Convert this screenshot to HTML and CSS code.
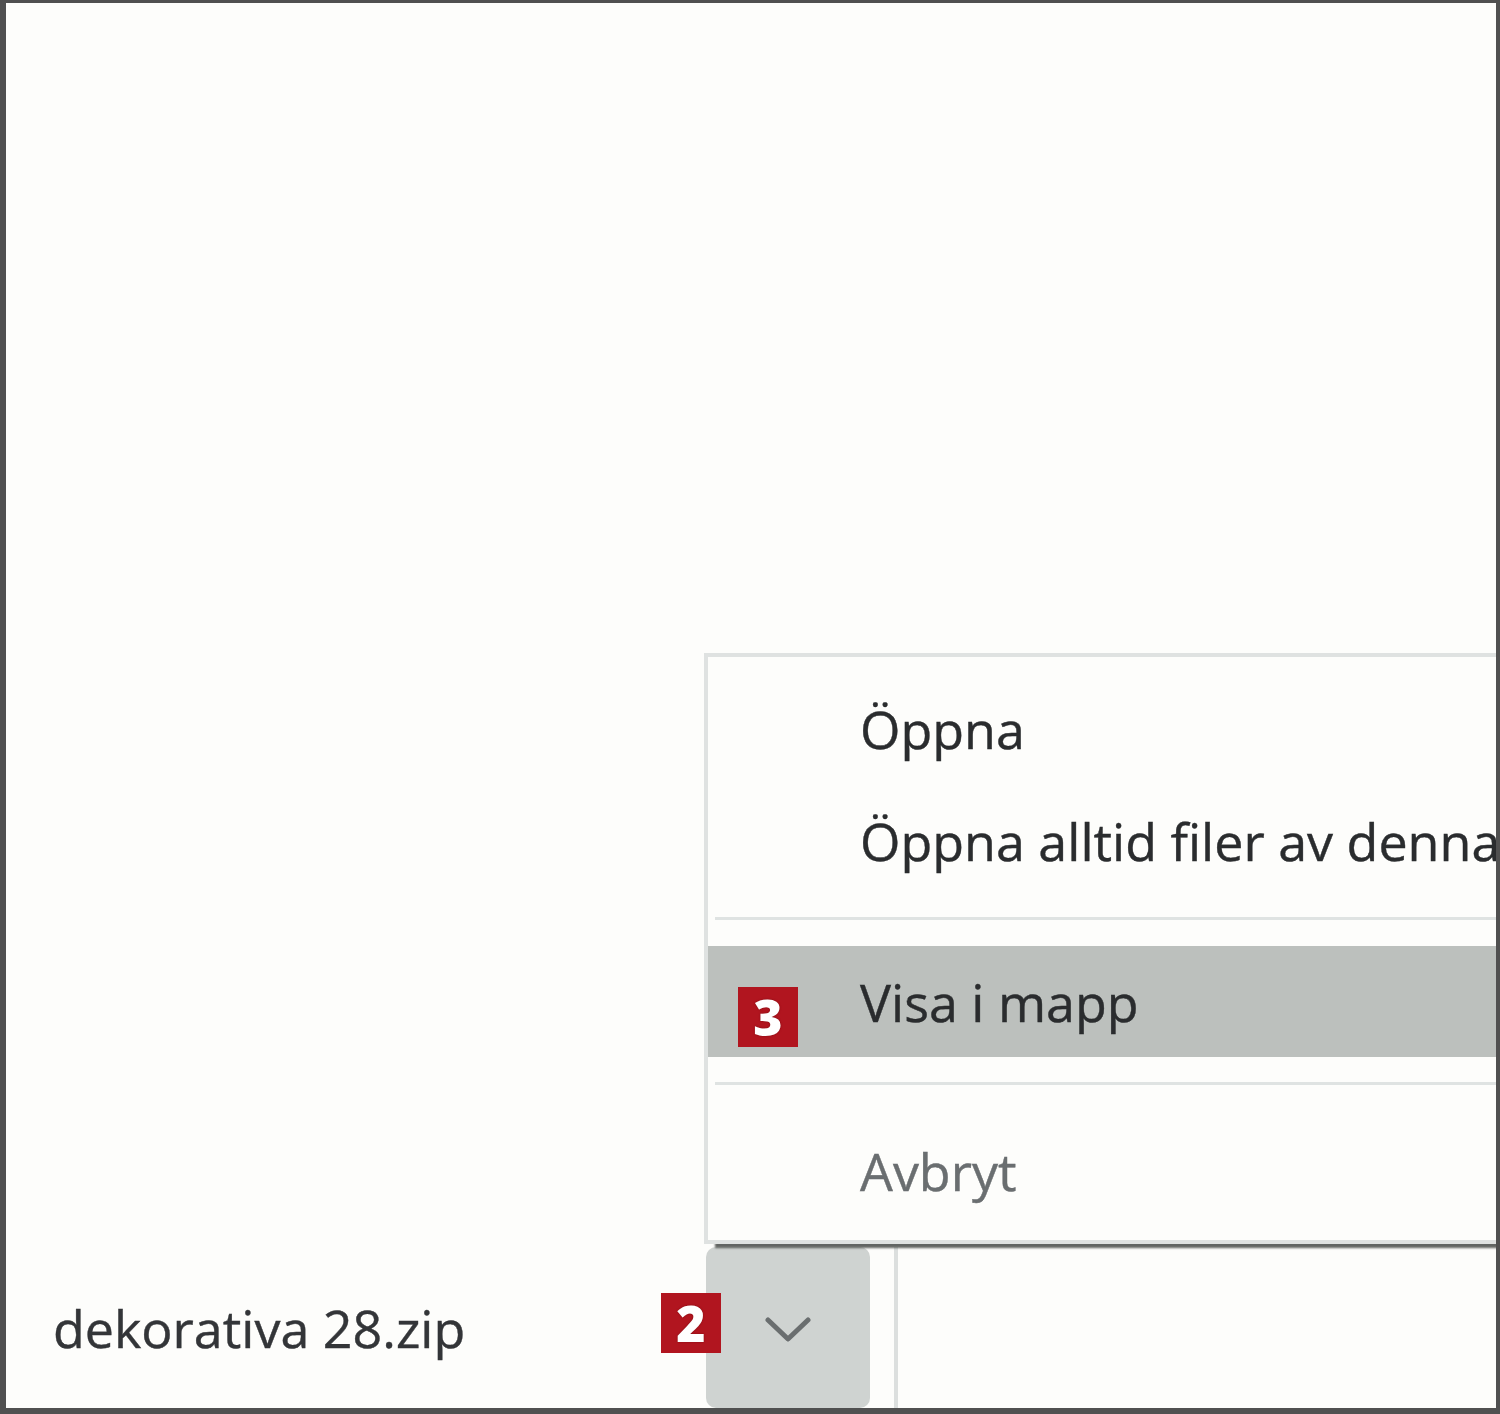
FILE: index.html
```html
<!DOCTYPE html>
<html lang="sv">
<head>
<meta charset="utf-8">
<title>Nedladdning</title>
<link rel="stylesheet" href="styles.css">
</head>
<body>
<div class="frame">
  <div class="inner">
    <div class="content"></div>

    <div class="menu">
      <div class="item">Öppna</div>
      <div class="item">Öppna alltid filer av denna typ</div>
      <div class="sep sep-a"></div>
      <div class="item item-active">
        <span class="badge badge-3">3</span>
        Visa i mapp
      </div>
      <div class="sep sep-b"></div>
      <div class="item item-muted">Avbryt</div>
    </div>

    <div class="bar">
      <div class="file">dekorativa 28.zip</div>
      <span class="badge badge-2">2</span>
      <div class="dropbtn">
        <svg class="chev" width="46" height="26" viewBox="0 0 46 26">
          <path d="M3 3 L23 22 L43 3" fill="none" stroke="#6a6e6f" stroke-width="5" stroke-linecap="round" stroke-linejoin="round"/>
        </svg>
      </div>
      <div class="vline"></div>
    </div>
  </div>
</div>
</body>
</html>
```

FILE: styles.css
```css
html, body {
  margin: 0;
  padding: 0;
  background: #4d4d4d;
}

.frame {
  width: 1500px;
  height: 1414px;
  box-sizing: border-box;
  border-style: solid;
  border-color: #505050;
  border-width: 3px 4px 6px 6px;
  display: flex;
}

.inner {
  position: relative;
  flex: 1;
  overflow: hidden;
  background: #fdfdfb;
  display: flex;
  flex-direction: column;
  font-family: "Open Sans", "Noto Sans", "Liberation Sans", sans-serif;
  color: #2a2c2e;
}

.content {
  flex: 1;
}

/* context menu */
.menu {
  position: absolute;
  left: 698px;
  top: 650px;
  width: 900px;
  border: 4px solid #dfe2e1;
  background: #fdfdfb;
  padding: 15px 0 14px 0;
  box-shadow: 10px 5px 2px -1px rgba(70, 74, 72, 0.85);
  z-index: 2;
}

.item {
  position: relative;
  height: 112px;
  display: flex;
  align-items: center;
  padding-left: 152px;
  font-size: 52px;
  white-space: nowrap;
  -webkit-text-stroke: 0.4px currentColor;
}

.item-active {
  height: 111px;
  background: #bcc0bd;
}

.item-muted {
  color: #6a6e70;
}

.sep {
  height: 3px;
  margin-left: 7px;
  background: #dfe3e2;
}

.sep-a {
  margin-top: 21px;
  margin-bottom: 26px;
}

.sep-b {
  margin-top: 25px;
  margin-bottom: 29px;
}

/* badges */
.badge {
  position: absolute;
  width: 60px;
  height: 60px;
  background: #b1151f;
  color: #ffffff;
  font-family: "Open Sans", "Liberation Sans", sans-serif;
  font-weight: 800;
  font-size: 50px;
  line-height: 60px;
  text-align: center;
  text-shadow: 0 0 2px #7a0a10;
  -webkit-text-stroke: 0;
  z-index: 3;
}

.badge-3 {
  left: 30px;
  top: 41px;
}

.badge-2 {
  left: 655px;
  top: 46px;
}

/* download bar */
.bar {
  position: relative;
  height: 161px;
  display: flex;
  align-items: stretch;
}

.file {
  width: 653px;
  padding-left: 47px;
  display: flex;
  align-items: center;
  font-size: 52px;
  color: #333538;
  white-space: nowrap;
  -webkit-text-stroke: 0.4px currentColor;
}

.dropbtn {
  width: 164px;
  background: #cfd3d1;
  border-radius: 10px;
  display: flex;
  align-items: center;
  justify-content: center;
}

.chev {
  display: block;
  margin-top: 4px;
}

.vline {
  width: 4px;
  margin-left: 24px;
  background: #dcdfde;
}
```
